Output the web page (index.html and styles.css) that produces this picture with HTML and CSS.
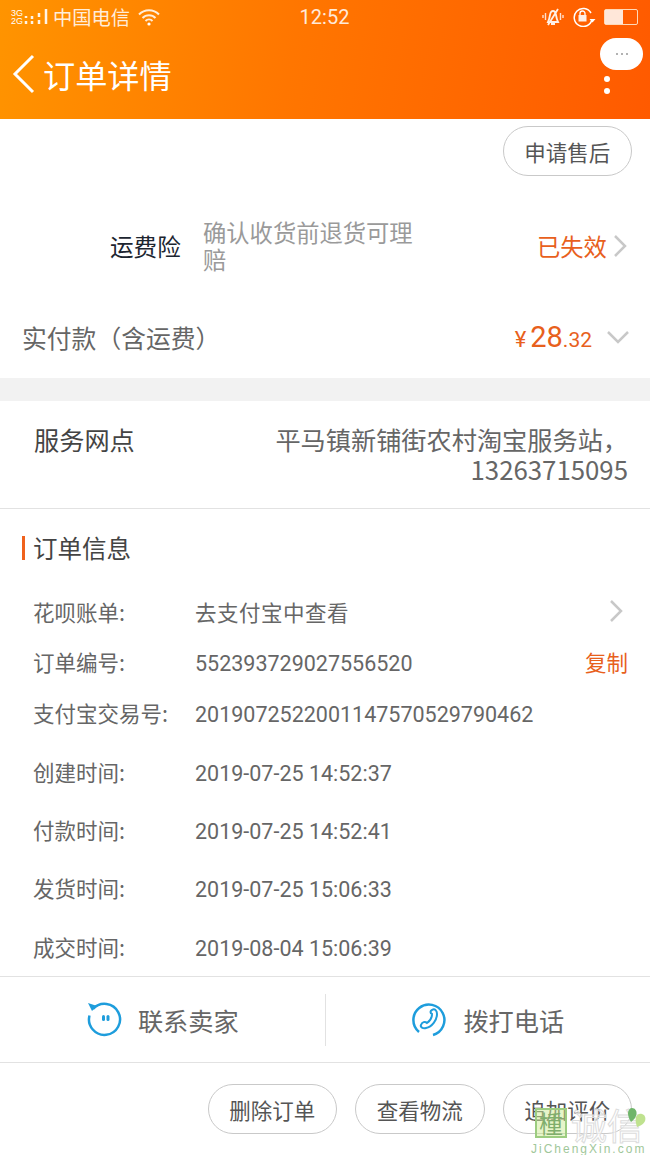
FILE: index.html
```html
<!DOCTYPE html>
<html lang="zh-CN">
<head>
    <meta charset="UTF-8">
    <meta name="viewport" content="width=device-width, initial-scale=1.0">
    <title>订单详情</title>
    <link rel="stylesheet" href="styles.css">
</head>
<body>
    <div class="page">
        <header class="top">
            <div class="status-bar">
                <div class="status-left">
                    <span class="net"><span>3G</span><span>2G</span></span>
                    <svg class="signal" width="28" height="20" viewBox="0 0 28 20">
                        <path d="M2 9v2M2 14v3M8 9v3M8 14v3M15 6v4M15 13v4M22 2v15" stroke="#fff" stroke-width="2.500" fill="none" opacity=".9"/>
                    </svg>
                    <span class="carrier">中国电信</span>
                    <svg class="wifi" width="24" height="18" viewBox="0 0 24 18">
                        <path d="M2 6.500a14 14 0 0 1 20 0M5.500 10a9 9 0 0 1 13 0M8.500 13a5 5 0 0 1 7 0" stroke="#fff" stroke-width="2" fill="none" opacity=".85"/>
                        <circle cx="12" cy="16" r="1.600" fill="#fff"/>
                    </svg>
                </div>
                <span class="clock">12:52</span>
                <div class="status-right">
                    <svg width="22" height="20" viewBox="0 0 22 20">
                        <path d="M6 15c1-2 1.500-4 2-7 .5-3 2-4 3-4s2.500 1 3 4c.5 3 1 5 2 7zM16 2 6 18M9 17h4" stroke="#fff" stroke-width="1.800" fill="none" opacity=".9"/>
                        <path d="M3.500 6v7M1 8v3M18.500 6v7M21 8v3" stroke="#fff" stroke-width="1.400" opacity=".8"/>
                    </svg>
                    <svg width="24" height="20" viewBox="0 0 24 20">
                        <path d="M20 12.500A9 9 0 1 1 19 6" stroke="#fff" stroke-width="1.500" fill="none"/>
                        <path d="M17.500 12h6l-3 3.500z" fill="#fff"/>
                        <rect x="6.500" y="8" width="8" height="6.500" fill="#fff" opacity=".9"/>
                        <path d="M8 8V6.500a2.500 2.500 0 0 1 5 0V8" stroke="#fff" stroke-width="1.300" fill="none"/>
                    </svg>
                    <div class="battery"><div class="battery-level"></div></div>
                </div>
            </div>
            <div class="title-bar">
                <svg class="back" width="24" height="40" viewBox="0 0 24 40">
                    <path d="M21 2 3 20l18 18" stroke="#fff" stroke-width="3" fill="none"/>
                </svg>
                <h1>订单详情</h1>
                <div class="more">
                    <div class="bubble"><span></span><span></span><span></span></div>
                    <i></i><i></i>
                </div>
            </div>
        </header>

        <div class="after-sale">
            <button class="pill">申请售后</button>
        </div>

        <div class="insurance">
            <span class="ins-name">运费险</span>
            <span class="ins-desc">确认收货前退货可理赔</span>
            <span class="ins-state">已失效</span>
            <svg width="14" height="24" viewBox="0 0 14 24">
                <path d="m2 2 10 10L2 22" stroke="#c8c8c8" stroke-width="2.500" fill="none"/>
            </svg>
        </div>

        <div class="paid">
            <span class="paid-label">实付款（含运费）</span>
            <span class="price"><small class="yen">¥</small>28<small>.32</small></span>
            <svg width="24" height="14" viewBox="0 0 24 14">
                <path d="m2 2 10 10L22 2" stroke="#c8c8c8" stroke-width="2.500" fill="none"/>
            </svg>
        </div>

        <div class="band"></div>

        <div class="service">
            <span>服务网点</span>
            <span class="service-value">平马镇新铺街农村淘宝服务站，<br><span class="phone">13263715095</span></span>
        </div>

        <section class="info">
            <h2>订单信息</h2>
            <div class="info-row row-a"><label>花呗账单:</label><span>去支付宝中查看</span>
                <svg class="row-arrow" width="14" height="24" viewBox="0 0 14 24"><path d="m2 2 10 10L2 22" stroke="#c8c8c8" stroke-width="2.500" fill="none"/></svg>
            </div>
            <div class="info-row row-b"><label>订单编号:</label><span class="num">552393729027556520</span><a>复制</a></div>
            <div class="info-row row-b"><label>支付宝交易号:</label><span class="num">2019072522001147570529790462</span></div>
            <div class="times">
                <div class="info-row row-c"><label>创建时间:</label><span class="num">2019-07-25 14:52:37</span></div>
                <div class="info-row row-c"><label>付款时间:</label><span class="num">2019-07-25 14:52:41</span></div>
                <div class="info-row row-c"><label>发货时间:</label><span class="num">2019-07-25 15:06:33</span></div>
                <div class="info-row row-c"><label>成交时间:</label><span class="num">2019-08-04 15:06:39</span></div>
            </div>
        </section>

        <div class="contact">
            <div class="contact-item">
                <svg width="36" height="36" viewBox="0 0 36 36">
                    <path d="M7 7a15.500 15.500 0 1 1-3.500 6.500" stroke="#1e9ddc" stroke-width="2.500" fill="none"/>
                    <path d="M2 1l9 3-5 5z" fill="#1e9ddc"/>
                    <rect x="16" y="13" width="3" height="6" rx="1.500" fill="#1e9ddc"/>
                    <rect x="20.500" y="13" width="3" height="6" rx="1.500" fill="#1e9ddc"/>
                </svg>
                <span>联系卖家</span>
            </div>
            <div class="contact-item">
                <svg width="36" height="36" viewBox="0 0 36 36">
                    <path d="M8 30A15.500 15.500 0 1 1 22 33" stroke="#1e9ddc" stroke-width="2.500" fill="none"/>
                    <path d="M21 8c3-2 5 1 5 4 0 6-5 13-11 14-3 1-6-1-5-3 1-3 4-4 6-2 3-2 5-6 5-9-2-1-2-3 0-4z" stroke="#1e9ddc" stroke-width="2" fill="none"/>
                </svg>
                <span>拨打电话</span>
            </div>
        </div>

        <div class="actions">
            <button class="pill">删除订单</button>
            <button class="pill">查看物流</button>
            <button class="pill">追加评价</button>
        </div>

        <div class="watermark">
            <div class="wm-box">㮔</div>
            <div class="wm-name">诚信</div>
            <svg class="wm-heart" width="18" height="20" viewBox="0 0 18 20">
                <path d="M4 0c3 0 5 3 4.500 6C8 9 6 12 3 14 1 11 0 8 0 5c0-3 2-5 4-5z" fill="#6fb56a"/>
                <path d="M8 9c1-2 3-4 6-3 3 1 4 4 3 7-1 3-5 5-8 6-1-3-2-7-1-10z" fill="#bfe28f"/>
            </svg>
            <div class="wm-url">JiChengXin.com</div>
        </div>
    </div>
</body>
</html>
```

FILE: styles.css
```css
* {
    box-sizing: border-box;
}
body {
    margin: 0;
    background: #fff;
    font-family: "Noto Sans CJK SC", "Noto Sans", sans-serif;
}
.page {
    position: relative;
    width: 650px;
    height: 1155px;
    overflow: hidden;
}

.top {
    height: 119px;
    background: linear-gradient(100deg, #ff9400 0%, #ff7600 45%, #ff5a00 100%);
    color: #fff;
}
.status-bar {
    display: flex;
    align-items: center;
    height: 33px;
    padding: 0 12px 0 11px;
}
.status-left {
    display: flex;
    flex: 1;
    align-items: center;
}
.net {
    display: flex;
    flex-direction: column;
    font: 9px/8px "Liberation Sans", sans-serif;
    width: 13px;
}
.signal {
    width: 28px;
}
.carrier {
    font-size: 19.300px;
    line-height: 24px;
    margin-left: 1px;
    opacity: .85;
}
.wifi {
    margin-left: 7px;
}
.clock {
    font: 20px Roboto, sans-serif;
    opacity: .85;
}
.status-right {
    display: flex;
    flex: 1;
    justify-content: flex-end;
    align-items: center;
    gap: 8px;
}
.battery {
    width: 34px;
    height: 16px;
    border: 1px solid #ffd9b8;
    border-radius: 2px;
}
.battery-level {
    width: 18px;
    height: 100%;
    background: #fff;
    opacity: .85;
}

.title-bar {
    position: relative;
    display: flex;
    align-items: center;
    height: 82px;
    padding-left: 12px;
}
.back {
    flex: none;
}
h1 {
    margin: 0 0 0 7px;
    font-size: 32.200px;
    font-weight: 400;
    line-height: 48px;
}
.more {
    position: absolute;
    top: 5px;
    left: 600px;
}
.bubble {
    display: flex;
    align-items: center;
    justify-content: center;
    gap: 3px;
    width: 43px;
    height: 32px;
    background: #fff;
    border-radius: 16px;
}
.bubble span {
    width: 2px;
    height: 2px;
    background: #999;
    border-radius: 50%;
}
.more i {
    display: block;
    width: 6px;
    height: 6px;
    margin: 6px 0 0 4px;
    background: #fff;
    border-radius: 50%;
}

.pill {
    width: 129.500px;
    height: 50px;
    padding: 0;
    background: #fff;
    border: 1px solid #c9c9c9;
    border-radius: 25px;
    color: #555;
    font-family: inherit;
    font-size: 21.500px;
}

.after-sale {
    display: flex;
    justify-content: flex-end;
    padding: 7px 18px 0 0;
    height: 58px;
}

.insurance {
    display: flex;
    align-items: center;
    height: 78px;
    margin-top: 30px;
    padding-left: 110px;
}
.ins-name {
    width: 93px;
    font-size: 23.600px;
    color: #1c2530;
}
.ins-desc {
    width: 212px;
    font-size: 23.300px;
    line-height: 27px;
    color: #9a9a9a;
}
.ins-state {
    margin-left: 122px;
    font-size: 23.300px;
    color: #e8601c;
}
.insurance svg {
    margin-left: 6px;
}

.paid {
    display: flex;
    align-items: center;
    height: 80px;
    margin-top: 13px;
    padding: 0 20px 3px 22px;
}
.paid-label {
    flex: 1;
    font-size: 24.800px;
    color: #666;
}
.price {
    font: 29px Roboto, sans-serif;
    color: #e8601c;
    margin-right: 14px;
}
.price small {
    font-size: 21px;
}
.price .yen {
    font-size: 22px;
    margin-right: 4px;
}

.band {
    height: 23px;
    background: #f2f2f2;
}

.service {
    display: flex;
    justify-content: space-between;
    height: 108px;
    padding: 23px 22px 0 34px;
    border-bottom: 1px solid #e2e2e2;
    font-size: 25.200px;
    line-height: 30px;
    color: #444;
}
.service-value {
    text-align: right;
    color: #666;
}
.phone {
    font-size: 25.800px;
}

.info {
    height: 468px;
    padding-top: 27px;
    border-bottom: 1px solid #e2e2e2;
}
h2 {
    margin: 0 0 25.500px 22px;
    padding-left: 8px;
    border-left: 3px solid #f0621d;
    font-size: 24.500px;
    font-weight: 400;
    line-height: 24px;
    color: #444;
}
.info-row {
    display: flex;
    align-items: center;
    padding: 0 22px 0 33px;
    font-size: 21.500px;
    color: #666;
}
.info-row label {
    width: 162px;
}
.info-row span {
    flex: 1;
    font-family: Roboto, sans-serif;
}
.info-row .num {
    padding-top: 4px;
}
.info-row a {
    font-size: 21.500px;
    color: #e8601c;
}
.row-arrow {
    margin-right: 5px;
}
.row-a {
    height: 51px;
}
.row-b {
    height: 50.500px;
}
.times {
    margin-top: 4.500px;
}
.row-c {
    height: 58.300px;
}

.contact {
    display: flex;
    align-items: center;
    height: 86px;
    border-bottom: 1px solid #e2e2e2;
}
.contact-item {
    display: flex;
    align-items: center;
    justify-content: center;
    gap: 16px;
    flex: 1;
    height: 52px;
    font-size: 25.200px;
    color: #666;
}
.contact-item + .contact-item {
    border-left: 1px solid #e2e2e2;
}

.actions {
    display: flex;
    justify-content: flex-end;
    gap: 18px;
    padding: 21px 18px 0 0;
}

.watermark {
    position: absolute;
    top: 1106px;
    left: 531px;
    width: 119px;
    height: 49px;
}
.wm-box {
    position: absolute;
    top: 2px;
    left: 4px;
    width: 32px;
    height: 30px;
    background: rgba(205, 235, 150, .5);
    border: 2px solid #9ccc80;
    color: #7fae6c;
    font-size: 24px;
    line-height: 25px;
    text-align: center;
}
.wm-name {
    position: absolute;
    top: -4px;
    left: 40px;
    color: rgba(255, 255, 255, .6);
    -webkit-text-stroke: 1px #dcdcdc;
    font-size: 36px;
    line-height: 44px;
    white-space: nowrap;
}
.wm-heart {
    position: absolute;
    top: 2px;
    left: 97px;
}
.wm-url {
    position: absolute;
    top: 35px;
    left: 0;
    color: #9fc79a;
    font: 12px/16px "Liberation Sans", sans-serif;
    letter-spacing: 2px;
    white-space: nowrap;
}
```
